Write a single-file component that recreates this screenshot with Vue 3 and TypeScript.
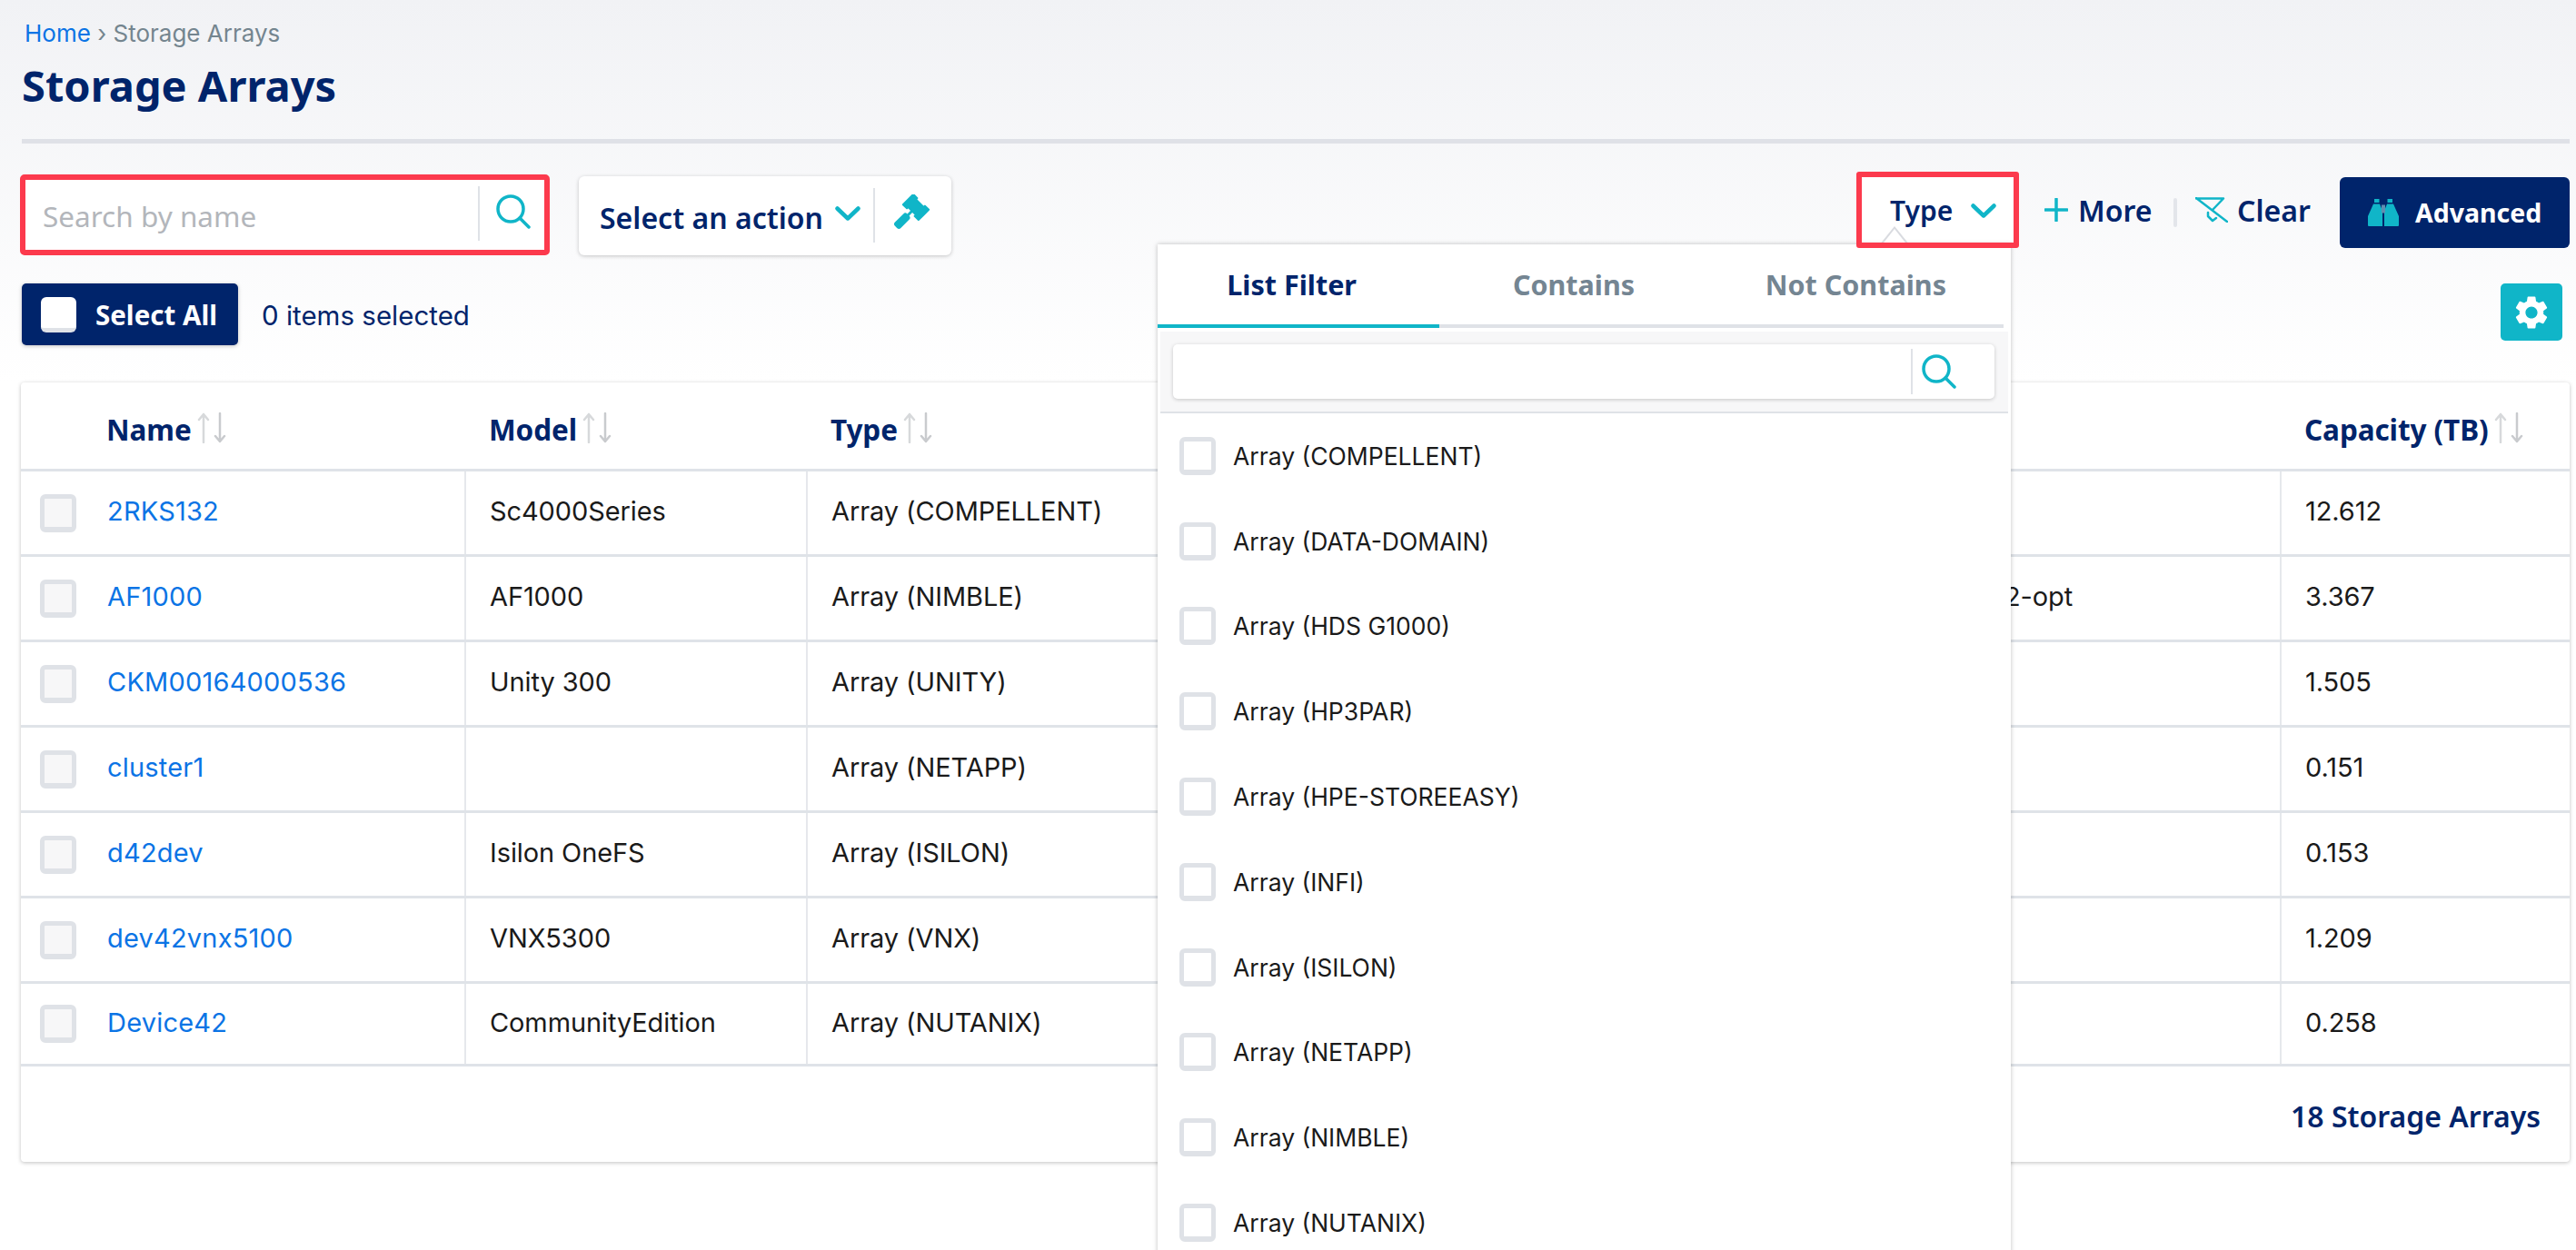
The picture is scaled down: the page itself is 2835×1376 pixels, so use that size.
<script setup lang="ts">
interface ArrayRow {
  name: string
  model: string
  type: string
  extra: string
  capacity: string
}

const rows: ArrayRow[] = [
  { name: '2RKS132', model: 'Sc4000Series', type: 'Array (COMPELLENT)', extra: '', capacity: '12.612' },
  { name: 'AF1000', model: 'AF1000', type: 'Array (NIMBLE)', extra: '2-opt', capacity: '3.367' },
  { name: 'CKM00164000536', model: 'Unity 300', type: 'Array (UNITY)', extra: '', capacity: '1.505' },
  { name: 'cluster1', model: '', type: 'Array (NETAPP)', extra: '', capacity: '0.151' },
  { name: 'd42dev', model: 'Isilon OneFS', type: 'Array (ISILON)', extra: '', capacity: '0.153' },
  { name: 'dev42vnx5100', model: 'VNX5300', type: 'Array (VNX)', extra: '', capacity: '1.209' },
  { name: 'Device42', model: 'CommunityEdition', type: 'Array (NUTANIX)', extra: '', capacity: '0.258' },
]

const columns = ['Name', 'Model', 'Type', '', 'Capacity (TB)']

const filterOptions = [
  'Array (COMPELLENT)',
  'Array (DATA-DOMAIN)',
  'Array (HDS G1000)',
  'Array (HP3PAR)',
  'Array (HPE-STOREEASY)',
  'Array (INFI)',
  'Array (ISILON)',
  'Array (NETAPP)',
  'Array (NIMBLE)',
  'Array (NUTANIX)',
]

const tabs = ['List Filter', 'Contains', 'Not Contains']
</script>

<template>
  <div class="page">
    <header class="page-head">
      <nav class="crumbs"><a class="crumbs__home">Home</a> › Storage Arrays</nav>
      <h1 class="page-head__title">Storage Arrays</h1>
    </header>

    <section class="toolbar">
      <div class="toolbar__left">
        <div class="search search--marked">
          <input class="search__input" placeholder="Search by name" />
          <span class="search__btn">
            <svg class="icon-search" viewBox="0 0 38 38" fill="none"><circle cx="16" cy="16" r="14" /><path d="M26 26l10 10" /></svg>
          </span>
        </div>
        <div class="action">
          <span class="action__label">Select an action</span>
          <svg class="chevron" viewBox="0 0 28 16" fill="none"><path d="M2.5 2.5L14 13.5 25.5 2.5" /></svg>
          <span class="action__sep"></span>
          <svg class="gavel" viewBox="0 0 40 40">
            <g transform="translate(24 14) rotate(45)">
              <path d="M-12 -8H-6V-6H6V-8H12V8H6V6H-6V8H-12Z" stroke="#10b5c8" stroke-width="2" stroke-linejoin="round" />
              <path d="M-1.5 6H1.5V13H-1.5Z" />
              <rect x="-4.5" y="12" width="9" height="19" rx="3" />
            </g>
          </svg>
        </div>
      </div>

      <div class="toolbar__right">
        <div class="type-filter">
          <span>Type</span>
          <svg class="chevron" viewBox="0 0 28 16" fill="none"><path d="M2.5 2.5L14 13.5 25.5 2.5" /></svg>
          <span class="type-filter__caret"></span>

          <div class="dropdown">
            <div class="dropdown__tabs">
              <span v-for="(t, i) in tabs" :key="t" class="dropdown__tab" :class="{ 'dropdown__tab--on': i === 0 }">{{ t }}</span>
            </div>
            <div class="dropdown__search">
              <div class="search search--small">
                <input class="search__input" />
                <span class="search__btn">
                  <svg class="icon-search" viewBox="0 0 38 38" fill="none"><circle cx="16" cy="16" r="14" /><path d="M26 26l10 10" /></svg>
                </span>
              </div>
            </div>
            <label v-for="o in filterOptions" :key="o" class="dropdown__option">
              <span class="check check--white"></span>
              {{ o }}
            </label>
          </div>
        </div>

        <a class="link link--more">
          <svg class="icon-plus" viewBox="0 0 26 26" fill="none"><path d="M13 1V25M1 13H25" /></svg>
          More
        </a>
        <span class="link-sep"></span>
        <a class="link link--clear">
          <svg class="icon-clear" viewBox="0 0 36 28" fill="none">
            <path d="M1 1L35 27M1 1.5H31L19 14M14 17V21L19 26L23 23" />
          </svg>
          Clear
        </a>
        <button class="btn-advanced">
          <svg class="icon-binoculars" viewBox="0 0 34 30">
            <path d="M7 0H12.500V4H7ZM21.500 0H27V4H21.500ZM6 5.500H13L16 13V30H1Q0 30 0 29V19ZM28 5.500H21L18 13V30H33Q34 30 34 29V19Z" />
            <rect class="icon-binoculars__mid" x="15" y="6.500" width="4" height="9" />
          </svg>
          Advanced
        </button>
      </div>
    </section>

    <section class="selection">
      <button class="btn-select-all"><span class="check check--solid"></span>Select All</button>
      <span class="selection__count">0 items selected</span>
      <button class="btn-gear">
        <svg viewBox="0 0 24 24" class="icon-gear"><path d="M19.14 12.94c.04-.3.06-.61.06-.94 0-.32-.02-.64-.07-.94l2.03-1.58c.18-.14.23-.41.12-.61l-1.92-3.32c-.12-.22-.37-.29-.59-.22l-2.39.96c-.5-.38-1.03-.7-1.62-.94l-.36-2.54c-.04-.24-.24-.41-.48-.41h-3.84c-.24 0-.43.17-.47.41l-.36 2.54c-.59.24-1.13.57-1.62.94l-2.39-.96c-.22-.08-.47 0-.59.22L2.74 8.87c-.12.21-.08.47.12.61l2.03 1.58c-.05.3-.09.63-.09.94s.02.64.07.94l-2.03 1.58c-.18.14-.23.41-.12.61l1.92 3.32c.12.22.37.29.59.22l2.39-.96c.5.38 1.03.7 1.62.94l.36 2.54c.05.24.24.41.48.41h3.84c.24 0 .44-.17.47-.41l.36-2.54c.59-.24 1.13-.56 1.62-.94l2.39.96c.22.08.47 0 .59-.22l1.92-3.32c.12-.22.07-.47-.12-.61l-2.01-1.58zM12 15.6c-1.98 0-3.6-1.62-3.6-3.6s1.62-3.6 3.6-3.6 3.6 1.62 3.6 3.6-1.62 3.6-3.6 3.6z" /></svg>
      </button>
    </section>

    <section class="card">
      <table class="grid">
        <colgroup>
          <col class="grid__c-name" />
          <col class="grid__c-model" />
          <col class="grid__c-type" />
          <col />
          <col class="grid__c-cap" />
        </colgroup>
        <thead>
          <tr>
            <th v-for="c in columns" :key="c">
              <span v-if="c" class="grid__head">
                {{ c }}
                <svg class="icon-sort" viewBox="0 0 32 34" fill="none">
                  <path class="icon-sort__up" d="M7 33V2M2 8L7 2L12 8" />
                  <path d="M25 1V32M20 26L25 32L30 26" />
                </svg>
              </span>
            </th>
          </tr>
        </thead>
        <tbody>
          <tr v-for="r in rows" :key="r.name">
            <td class="grid__first">
              <div class="grid__name"><span class="check"></span><a>{{ r.name }}</a></div>
            </td>
            <td>{{ r.model }}</td>
            <td>{{ r.type }}</td>
            <td class="grid__extra">{{ r.extra }}</td>
            <td>{{ r.capacity }}</td>
          </tr>
        </tbody>
      </table>
      <div class="card__foot">18 Storage Arrays</div>
    </section>
  </div>
</template>

<style scoped>
.page {
  box-sizing: border-box;
  width: 2835px;
  height: 1376px;
  overflow: hidden;
  padding: 0 7px 0 24px;
  background: linear-gradient(#f1f2f5, #ffffff 420px);
  font-family: Inter, "Noto Sans", sans-serif;
  color: #1a1a1a;
}

.page-head {
  height: 158px;
  padding-top: 21px;
  box-sizing: border-box;
  border-bottom: 5px solid #dfe1e7;
}

.crumbs {
  font-size: 26px;
  line-height: 32px;
  color: #74858f;
  padding-left: 3px;
}

.crumbs__home {
  color: #0b74e5;
}

.page-head__title {
  margin: 11px 0 0;
  font-family: "Noto Sans", sans-serif;
  font-size: 47px;
  line-height: 60px;
  font-weight: 700;
  color: #00246b;
}

.toolbar {
  display: flex;
  justify-content: space-between;
  align-items: flex-start;
  margin-top: 31px;
  height: 95px;
}

.toolbar__left {
  display: flex;
  align-items: flex-start;
  padding-top: 3px;
  margin-left: -2px;
  gap: 32px;
}

.search {
  display: flex;
  align-items: center;
  background: #fff;
  border-radius: 5px;
  box-sizing: border-box;
}

.search--marked {
  width: 583px;
  height: 89px;
  border: 6px solid #fc3a4d;
}

.search--small {
  width: 904px;
  height: 60px;
  box-shadow: 0 1px 4px rgba(0, 0, 0, 0.2);
}

.search__input {
  flex: 1;
  min-width: 0;
  height: 100%;
  border: 0;
  outline: 0;
  background: transparent;
  padding: 2px 0 0 19px;
  box-sizing: border-box;
  font-family: "Noto Sans", sans-serif;
  font-size: 31.500px;
  color: #1a1a1a;
}

.search__input::placeholder {
  color: #b3b6bb;
}

.search__btn {
  display: flex;
  align-items: center;
  height: 50px;
  width: 92px;
  padding-left: 10px;
  box-sizing: border-box;
  border-left: 2px solid #dfe2e7;
}

.search--marked .search__btn {
  height: 60px;
  width: 73px;
  padding-left: 18px;
  margin-top: -4px;
}

.search--marked .icon-search {
  margin-top: -4px;
}

.icon-search {
  width: 38px;
  height: 38px;
}

.icon-search circle,
.icon-search path {
  stroke: #10b5c8;
  stroke-width: 3.500;
  stroke-linecap: round;
}

.action {
  display: flex;
  align-items: center;
  width: 410px;
  height: 87px;
  margin-top: 2px;
  padding-left: 23px;
  box-sizing: border-box;
  background: #fff;
  border-radius: 6px;
  box-shadow: 0 1px 4px rgba(0, 0, 0, 0.22);
}

.action__label {
  width: 246px;
  margin-top: 3px;
  white-space: nowrap;
  font-family: "Noto Sans", sans-serif;
  font-size: 32px;
  font-weight: 600;
  color: #00246b;
}

.chevron {
  width: 28px;
  height: 16px;
}

.chevron path {
  stroke: #10b5c8;
  stroke-width: 4.500;
  stroke-linecap: round;
  stroke-linejoin: round;
}

.action .chevron {
  margin: -6px 0 0 13px;
}

.action__sep {
  width: 2px;
  height: 60px;
  margin: -2px 0 0 14px;
  background: #dfe2e7;
}

.gavel {
  width: 40px;
  height: 40px;
  margin: -8px 0 0 21px;
  fill: #10b5c8;
}

.toolbar__right {
  display: flex;
  align-items: flex-start;
  width: 785px;
}

.type-filter {
  position: relative;
  display: flex;
  align-items: center;
  width: 179px;
  height: 84px;
  padding-left: 37px;
  box-sizing: border-box;
  background: #fff;
  font-family: "Noto Sans", sans-serif;
  font-size: 30px;
  font-weight: 600;
  color: #00246b;
}

.type-filter::after {
  content: "";
  position: absolute;
  inset: 0;
  z-index: 3;
  border: 6px solid #fc3a4d;
  border-radius: 3px;
  pointer-events: none;
}

.type-filter .chevron {
  margin: 1px 0 0 20px;
}

.type-filter__caret {
  position: absolute;
  left: 25px;
  top: 60px;
  z-index: 2;
  width: 0;
  height: 0;
  border-left: 17px solid transparent;
  border-right: 17px solid transparent;
  border-bottom: 21px solid #d9dbe0;
}

.type-filter__caret::after {
  content: "";
  position: absolute;
  left: -15px;
  top: 3px;
  width: 0;
  height: 0;
  border-left: 15px solid transparent;
  border-right: 15px solid transparent;
  border-bottom: 19px solid #fff;
}

.dropdown {
  position: absolute;
  top: 80px;
  left: -769px;
  z-index: 1;
  width: 939px;
  height: 1200px;
  background: #fff;
  box-shadow: 0 0 5px rgba(0, 0, 0, 0.25);
  font-weight: 400;
}

.dropdown__tabs {
  display: flex;
  width: 931px;
  height: 92px;
  box-sizing: border-box;
  border-bottom: 4px solid #dfe2e7;
}

.dropdown__tab {
  flex: 1;
  height: 92px;
  line-height: 88px;
  padding-right: 15px;
  box-sizing: border-box;
  text-align: center;
  font-size: 30.500px;
  font-weight: 700;
  color: #748592;
}

.dropdown__tab--on {
  color: #00246b;
  border-bottom: 4px solid #10b5c8;
}

.dropdown__search {
  display: flex;
  align-items: center;
  height: 88px;
  margin: 4px 3px 0;
  padding-left: 14px;
  background: #f7f7f8;
  border-bottom: 2px solid #dfe2e7;
}

.dropdown__option {
  display: flex;
  align-items: center;
  gap: 19px;
  height: 93.800px;
  padding-left: 24px;
  font-family: Inter, sans-serif;
  font-size: 26.500px;
  font-weight: 400;
  color: #1a1a1a;
}

.check {
  flex: none;
  display: inline-block;
  box-sizing: border-box;
  width: 40px;
  height: 42px;
  background: #f7f7f8;
  border: 5px solid #dfe2e7;
  border-bottom-width: 6px;
  border-radius: 6px;
}

.check--white {
  background: #fff;
}

.check--solid {
  background: #fff;
  width: 39px;
  height: 39px;
  border-width: 0 0 5px;
}

.link {
  display: flex;
  align-items: center;
  height: 84px;
  font-family: "Noto Sans", sans-serif;
  font-size: 32px;
  font-weight: 600;
  color: #00246b;
}

.link--more {
  width: 119px;
  margin-left: 28px;
  gap: 11px;
}

.icon-plus {
  flex: none;
  width: 26px;
  height: 26px;
}

.icon-plus path {
  stroke: #10b5c8;
  stroke-width: 3.500;
  stroke-linecap: round;
}

.link-sep {
  width: 4px;
  height: 32px;
  margin: 29px 20px 0 23px;
  background: #e3e5ea;
  border-radius: 2px;
}

.link--clear {
  gap: 10px;
}

.icon-clear {
  width: 36px;
  height: 28px;
}

.icon-clear path {
  stroke: #10b5c8;
  stroke-width: 2.500;
  stroke-linecap: round;
  stroke-linejoin: round;
}

.btn-advanced {
  display: flex;
  align-items: center;
  gap: 18px;
  width: 253px;
  height: 78px;
  margin: 6px 0 0 auto;
  padding: 0 0 0 31px;
  box-sizing: border-box;
  border: 0;
  border-radius: 6px;
  background: #00246b;
  font-family: "Noto Sans", sans-serif;
  font-size: 28.500px;
  font-weight: 700;
  color: #fff;
}

.icon-binoculars {
  width: 34px;
  height: 30px;
  fill: #10b5c8;
}

.icon-binoculars__mid {
  fill: #5f8eb0;
}

.selection {
  display: flex;
  align-items: flex-start;
  margin-top: 28px;
  height: 109px;
}

.btn-select-all {
  display: flex;
  align-items: center;
  gap: 21px;
  width: 238px;
  height: 68px;
  padding: 0 0 0 21px;
  box-sizing: border-box;
  border: 0;
  border-radius: 5px;
  background: #00246b;
  box-shadow: 0 1px 4px rgba(0, 0, 0, 0.25);
  font-family: "Noto Sans", sans-serif;
  font-size: 29.500px;
  font-weight: 700;
  color: #fff;
}

.selection__count {
  margin-left: 26px;
  line-height: 70px;
  font-size: 29.500px;
  color: #00246b;
}

.btn-gear {
  display: flex;
  align-items: center;
  justify-content: center;
  width: 68px;
  height: 63px;
  margin: 0 8px 0 auto;
  padding: 0;
  border: 0;
  border-radius: 5px;
  background: #10b5c8;
}

.icon-gear {
  width: 44px;
  height: 44px;
  fill: #fff;
}

.card {
  margin-left: -1px;
  height: 858px;
  background: #fff;
  border-radius: 4px;
  box-shadow: 0 1px 4px rgba(0, 0, 0, 0.25);
}

.grid {
  width: 100%;
  table-layout: fixed;
  border-collapse: collapse;
  font-size: 29px;
  letter-spacing: -0.1px;
}

.grid__c-name { width: 489px; }
.grid__c-model { width: 376px; }
.grid__c-type { width: 1000px; }
.grid__c-cap { width: 318px; }

.grid th {
  height: 95px;
  padding: 0 0 0 26px;
  text-align: left;
  border-bottom: 3px solid #dfe3e8;
}

.grid th:first-child {
  padding-left: 94px;
}

.grid__head {
  display: inline-flex;
  align-items: center;
  gap: 6px;
  margin-top: 8px;
  font-family: "Noto Sans", sans-serif;
  font-size: 31.500px;
  font-weight: 700;
  color: #00246b;
}

.icon-sort {
  width: 32px;
  height: 34px;
  margin-top: -4px;
}

.icon-sort path {
  stroke: #c9cbce;
  stroke-width: 2.500;
  stroke-linecap: round;
  stroke-linejoin: round;
}

.grid .icon-sort__up {
  stroke: #d7d9db;
}

.grid td {
  height: 94px;
  padding: 0 0 4px 26px;
  box-sizing: border-box;
  border-bottom: 3px solid #dfe3e8;
  border-left: 2px solid #e6e8ec;
  white-space: nowrap;
}

.grid tr:last-child td {
  height: 91px;
}

.grid td.grid__first {
  border-left: 0;
  padding: 0 0 0 21px;
}

.grid__name {
  display: flex;
  align-items: center;
  gap: 34px;
}

.grid__name a {
  margin-top: -4px;
  color: #0b74e5;
  letter-spacing: 0.2px;
}

.grid td.grid__extra {
  padding-left: 317px;
}

.card__foot {
  height: 108px;
  line-height: 110px;
  padding-right: 32px;
  text-align: right;
  font-family: "Noto Sans", sans-serif;
  font-size: 32px;
  font-weight: 600;
  color: #00246b;
}
</style>
